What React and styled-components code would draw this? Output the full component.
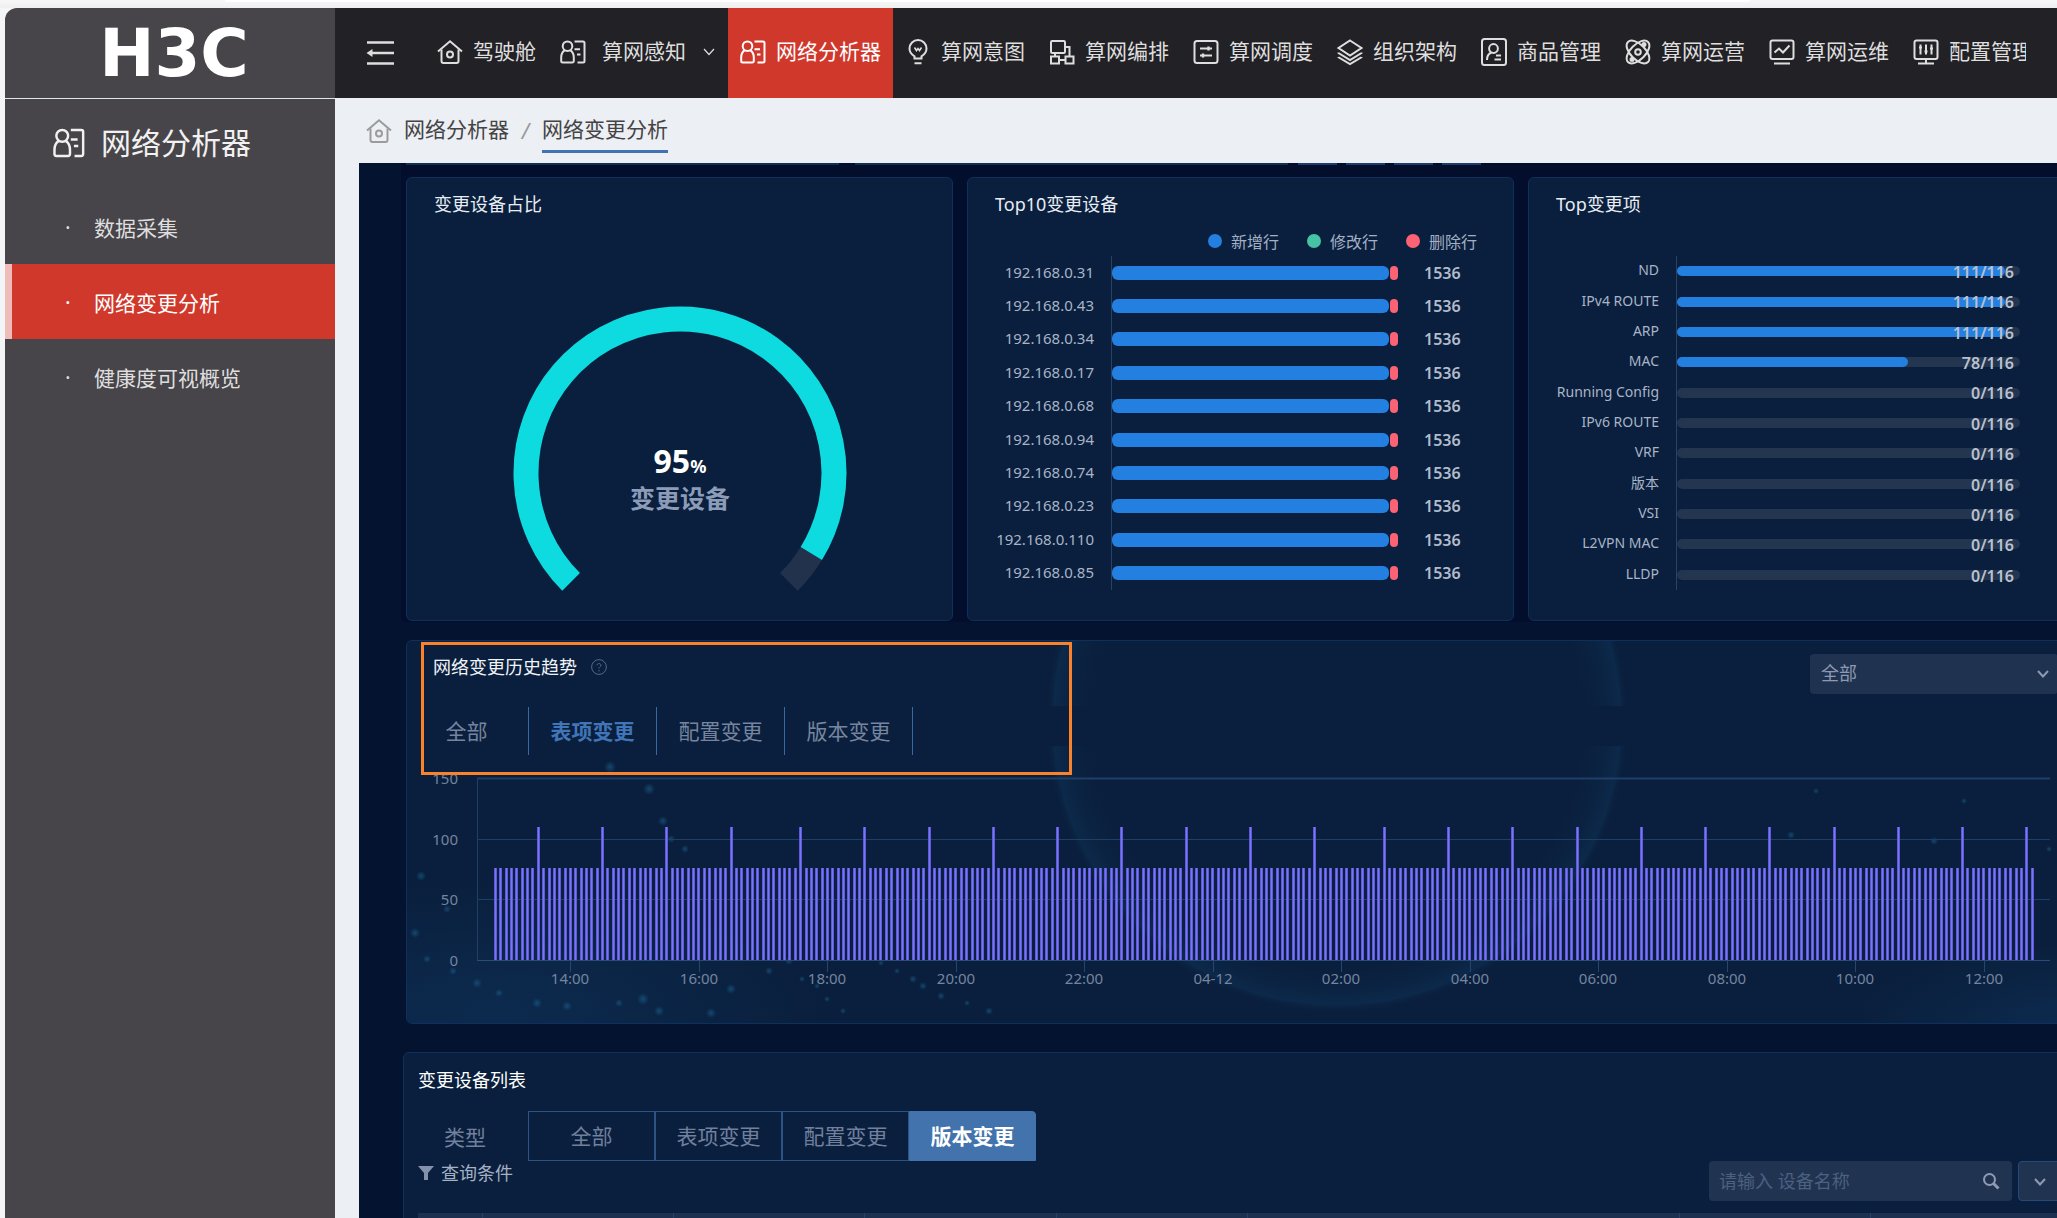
import React, { useState } from 'react'
import styled, { createGlobalStyle, css } from 'styled-components'

const navItems = [
  { text: '驾驶舱', icon: 'home' },
  { text: '算网感知', icon: 'report', sub: true },
  { text: '网络分析器', icon: 'report', active: true },
  { text: '算网意图', icon: 'bulb' },
  { text: '算网编排', icon: 'blocks' },
  { text: '算网调度', icon: 'switches' },
  { text: '组织架构', icon: 'layers' },
  { text: '商品管理', icon: 'badge' },
  { text: '算网运营', icon: 'atom' },
  { text: '算网运维', icon: 'monitor' },
  { text: '配置管理', icon: 'tuner' },
]

const sideItems = ['数据采集', '网络变更分析', '健康度可视概览']

const devices = ['31', '43', '34', '17', '68', '94', '74', '23', '110', '85']

const changeItems = [
  { name: 'ND', count: 111 },
  { name: 'IPv4 ROUTE', count: 111 },
  { name: 'ARP', count: 111 },
  { name: 'MAC', count: 78 },
  { name: 'Running Config', count: 0 },
  { name: 'IPv6 ROUTE', count: 0 },
  { name: 'VRF', count: 0 },
  { name: '版本', count: 0 },
  { name: 'VSI', count: 0 },
  { name: 'L2VPN MAC', count: 0 },
  { name: 'LLDP', count: 0 },
]
const total = 116

const tabs = ['全部', '表项变更', '配置变更', '版本变更']

const hours = ['14:00', '16:00', '18:00', '20:00', '22:00', '04-12', '02:00', '04:00', '06:00', '08:00', '10:00', '12:00']

// column widths of the device list
const columns = [64, 191, 191, 192, 191, 432, 191]

// one sample every five minutes, the hourly ones are higher
const peaks = [8, 20, 32, 44, 57, 69, 81, 93, 105, 117, 129, 141, 153, 166, 178, 190, 202, 214, 226, 238, 250, 262, 274, 286]
const samples = Array.from({ length: 288 }, (_, i) => (peaks.includes(i) ? 110 : 77))

const shapes = {
  home: (
    <>
      <path d="M1 12.5 13 2.2 25 12.5" />
      <path d="M4.5 10.5V22a2 2 0 0 0 2 2h13a2 2 0 0 0 2-2V10.5" />
      <circle cx="13" cy="15.5" r="3" />
    </>
  ),
  report: (
    <>
      <circle cx="7.5" cy="7.2" r="4.800" />
      <path d="M4.800 11.2C2.4 12.8 1.200 15.500 1.200 18.500V22a1.500 1.500 0 0 0 1.500 1.500h9.600a1.500 1.500 0 0 0 1.500-1.500v-3.500c0-3-1.200-5.700-3.600-7.300" />
      <path d="M14.500 2.500H23a1.500 1.500 0 0 1 1.500 1.500v18a1.500 1.500 0 0 1-1.500 1.500h-5.500M14.500 10.200h5.500M17 15.500h3.500" />
    </>
  ),
  bulb: (
    <>
      <path d="M9.500 19.500v-2.200C6.500 15.500 4.500 13 4.500 9.500a8.500 8.500 0 0 1 17 0c0 3.500-2 6-5 7.800v2.200z" />
      <path d="M9.500 8.500l2 3 1.500-2 1.500 2 2-3" strokeWidth="1.600" />
      <path d="M9.500 24.200h7" />
    </>
  ),
  blocks: (
    <>
      <rect x="2" y="2" width="14" height="12" rx="1.200" />
      <rect x="2" y="17.500" width="8" height="7" />
      <rect x="16.500" y="17.500" width="8" height="7" />
      <path d="M16 8h4.500v9.500M10 21h6.500M6 14v3.500" />
    </>
  ),
  switches: (
    <>
      <rect x="1.500" y="2" width="23" height="22" rx="2.500" />
      <path d="M7 9.500h12M7 16.500h12" />
      <path d="M15.500 7.500v4M10 14.500v4" strokeWidth="2.400" />
    </>
  ),
  layers: (
    <>
      <path d="M13 1.500 24.500 9 13 16.500 1.500 9z" />
      <path d="M1.500 13.500v.5L13 21l11.500-7v-.5M1.500 18v.300L13 25l11.500-6.700V18" />
    </>
  ),
  badge: (
    <>
      <rect x="1" y="0" width="24" height="26" rx="2.500" />
      <circle cx="12.500" cy="9.500" r="4.400" />
      <path d="M10.500 13.500C7.500 14.500 6 17.500 6 21M15 16.500h5M13.500 20.500h6.500" />
    </>
  ),
  atom: (
    <>
      <ellipse cx="13" cy="13" rx="14.200" ry="7.500" transform="rotate(45 13 13)" />
      <ellipse cx="13" cy="13" rx="14.200" ry="7.500" transform="rotate(-45 13 13)" />
      <circle cx="13" cy="13" r="2.800" />
      <circle cx="19" cy="5.500" r="1.500" fill="currentColor" />
      <circle cx="7" cy="20.500" r="1.500" fill="currentColor" />
    </>
  ),
  monitor: (
    <>
      <rect x="1.500" y="1.500" width="23" height="18.500" rx="2" />
      <path d="M5.500 13.500l4.500-4 4 4 6.500-7M5 24.500h16" />
    </>
  ),
  tuner: (
    <>
      <rect x="1.500" y="1.500" width="23" height="18.500" rx="2" />
      <path d="M7.500 5.500v10M13 5.500v10M18.500 5.500v10" />
      <path d="M6 8.500h3M11.500 12.500h3M17 9.500h3M13 20v4M5 24.500h16" />
    </>
  ),
}

function Icon({ name, size = 26 }) {
  return (
    <svg width={size} height={size} viewBox="0 0 26 26" fill="none" stroke="currentColor" strokeWidth="2" overflow="visible" aria-hidden="true">
      {shapes[name]}
    </svg>
  )
}

function Chevron({ width = 12, stroke = 2 }) {
  return (
    <svg width={width} height="8" viewBox="0 0 12 8" fill="none" stroke="currentColor" strokeWidth={stroke} aria-hidden="true">
      <path d="M1 1l5 5.500L11 1" />
    </svg>
  )
}

function polar(r, deg) {
  const a = (deg * Math.PI) / 180
  return `${167 + r * Math.cos(a)} ${167 + r * Math.sin(a)}`
}

function arc(from, to) {
  const large = to - from > 180 ? 1 : 0
  return `M${polar(154, from)}A154 154 0 ${large} 1 ${polar(154, to)}`
}

function Gauge({ value }) {
  const end = 135 + 270 * (value / 100)
  return (
    <GaugeSvg viewBox="0 0 334 288" width="334" height="288">
      <path d={arc(end, 405)} stroke="#22314c" />
      <path d={arc(135, end)} stroke="#0ddbe0" />
      <text x="167" y="167" fontSize="32" fill="#fff">
        {value}
        <tspan fontSize="18">%</tspan>
      </text>
      <text x="167" y="202" fontSize="25" fill="#8c9cb8">变更设备</text>
    </GaugeSvg>
  )
}

function TrendChart() {
  const yOf = (v) => Math.round(185 - v * 1.213)
  return (
    <ChartSvg viewBox="0 0 1667 248">
      {[0, 50, 100, 150].map((v) => (
        <g key={v}>
          <path d={`M70 ${yOf(v)}.500H1643`} stroke="#1f3f66" strokeWidth={v === 150 ? 2 : 1} />
          <text x="51" y={yOf(v) + 6} textAnchor="end">{v}</text>
        </g>
      ))}
      <path d="M70.500 3V185" stroke="#1f3f66" />
      {hours.map((h, i) => {
        const x = Math.round(163 + i * 128.5)
        return (
          <g key={h}>
            <path d={`M${x}.500 186v11`} stroke="#27466d" />
            <text x={x} y="209" textAnchor="middle">{h}</text>
          </g>
        )
      })}
      {samples.map((v, i) => {
        const x = Math.round(87 + i * 5.354)
        const y = v > 100 ? yOf(v) : yOf(v) + 1
        return (
          <g key={i}>
            <rect x={x} y={y} width="3" height={185 - y} fill="#5f5bd6" />
            <rect x={x + 1} y={y} width="1" height={185 - y} fill="#7a73fb" />
          </g>
        )
      })}
      <path d="M70 185.500H1643" stroke="#2c4c78" />
    </ChartSvg>
  )
}

// faint planet outline and star dust behind the trend chart
function Sky() {
  const dust = [
    [14, 235, 3], [40, 268, 2], [8, 292, 3], [20, 318, 2], [46, 330, 2], [70, 342, 3], [92, 352, 2], [130, 362, 3],
    [203, 126, 4], [242, 148, 4], [256, 180, 3], [264, 198, 2], [278, 208, 2], [160, 365, 3], [212, 362, 2], [236, 358, 4],
    [252, 370, 3], [304, 372, 3], [324, 348, 3], [382, 320, 2], [362, 330, 2], [395, 338, 1], [410, 345, 1], [420, 358, 1],
    [436, 370, 1], [474, 322, 1], [490, 330, 1], [506, 338, 2], [516, 345, 2], [534, 355, 2], [560, 362, 1], [582, 370, 2],
    [1409, 150, 1], [1384, 194, 2], [1527, 200, 2], [1642, 208, 1], [1557, 160, 1],
  ]
  return (
    <SkySvg viewBox="0 0 1667 382" preserveAspectRatio="xMidYMid slice" aria-hidden="true">
      <defs>
        <radialGradient id="glow" cx="50%" cy="50%" r="50%">
          <stop offset="0.82" stopColor="#0a1f3d" stopOpacity="0" />
          <stop offset="0.97" stopColor="#12406a" stopOpacity="0.3" />
          <stop offset="1" stopColor="#0a1f3d" stopOpacity="0" />
        </radialGradient>
        <radialGradient id="haze">
          <stop offset="0" stopColor="#10406e" stopOpacity="0.35" />
          <stop offset="1" stopColor="#10406e" stopOpacity="0" />
        </radialGradient>
        <radialGradient id="dust">
          <stop offset="0" stopColor="#1a6291" stopOpacity="0.6" />
          <stop offset="1" stopColor="#1a6291" stopOpacity="0" />
        </radialGradient>
      </defs>
      <circle cx="930" cy="80" r="292" fill="url(#glow)" />
      <rect x="0" y="65" width="1667" height="40" fill="#0a1f3d" />
      <ellipse cx="90" cy="370" rx="330" ry="130" fill="url(#haze)" />
      <ellipse cx="1667" cy="382" rx="220" ry="80" fill="url(#haze)" />
      {dust.map(([x, y, r]) => (
        <circle key={`${x}-${y}`} cx={x} cy={y} r={r + 2} fill="url(#dust)" />
      ))}
    </SkySvg>
  )
}

function App() {
  const [trendTab, setTrendTab] = useState('表项变更')
  const [listTab, setListTab] = useState('版本变更')

  return (
    <Page>
      <GlobalStyle />
      <TopEdge><span /></TopEdge>
      <Shell>
        <Sidebar>
          <Logo>H3C</Logo>
          <SideTitle>
            <Icon name="report" size={32} />
            网络分析器
          </SideTitle>
          <nav>
            {sideItems.map((item, i) => (
              <SideLink key={item} href="#" $active={i === 1}>
                <i>·</i>
                {item}
              </SideLink>
            ))}
          </nav>
        </Sidebar>

        <Main>
          <Header>
            <Toggle aria-label="收起菜单">
              <svg width="28" height="26" viewBox="0 0 28 26" fill="none" stroke="currentColor" strokeWidth="2.400">
                <path d="M1 2.500h27M4 13h24M1 23.500h27" />
                <path d="M6.500 9v8L.500 13z" fill="currentColor" stroke="none" />
              </svg>
            </Toggle>
            <Nav>
              {navItems.map((item) => (
                <NavLink key={item.text} href="#" $active={item.active} $sub={item.sub}>
                  <Icon name={item.icon} />
                  <span>{item.text}</span>
                  {item.sub && <Chevron width={14} stroke={1.2} />}
                </NavLink>
              ))}
            </Nav>
          </Header>

          <Crumbs>
            <Icon name="home" />
            <Crumb href="#">网络分析器</Crumb>
            <em>/</em>
            <Crumb href="#" $current>网络变更分析</Crumb>
          </Crumbs>

          <Board>
            <Content>
              <PrevRow>
                <span /><span /><b /><b /><b /><b />
              </PrevRow>

              <Cards>
                <Card>
                  <CardTitle>变更设备占比</CardTitle>
                  <Gauge value={95} />
                </Card>

                <Card>
                  <CardTitle>Top10变更设备</CardTitle>
                  <Legend>
                    <LegendItem $color="#237fe0">新增行</LegendItem>
                    <LegendItem $color="#45c3a4">修改行</LegendItem>
                    <LegendItem $color="#fb6375">删除行</LegendItem>
                  </Legend>
                  <Rows $right={115} $label={143}>
                    {devices.map((d) => (
                      <Row key={d}>
                        <RowLabel $size={15}>192.168.0.{d}</RowLabel>
                        <Axis>
                          <AddBar />
                          <DelBar />
                        </Axis>
                        <RowValue>1536</RowValue>
                      </Row>
                    ))}
                  </Rows>
                </Card>

                <Card>
                  <CardTitle>Top变更项</CardTitle>
                  <Rows $right={54} $label={147} $top={39}>
                    {changeItems.map((c) => (
                      <Row key={c.name}>
                        <RowLabel $size={14}>{c.name}</RowLabel>
                        <Axis>
                          <Track>
                            <Fill style={{ width: `${(c.count / total) * 100}%` }} />
                          </Track>
                          <OverValue>{c.count}/{total}</OverValue>
                        </Axis>
                      </Row>
                    ))}
                  </Rows>
                </Card>
              </Cards>

              <Trend>
                <Sky />
                <TrendHead>
                  <Focus>
                    <TrendTitle>
                      网络变更历史趋势
                      <svg width="16" height="16" viewBox="0 0 16 16" fill="none" stroke="#56688a" aria-hidden="true">
                        <circle cx="8" cy="8" r="7.400" />
                        <path d="M6 6.300C6 4 10 4 10 6.300c0 1.400-2 1.400-2 3.200M8 11v1.400" />
                      </svg>
                    </TrendTitle>
                    <TrendTabs>
                      {tabs.map((t) => (
                        <TrendTab key={t} $active={t === trendTab} onClick={() => setTrendTab(t)}>{t}</TrendTab>
                      ))}
                    </TrendTabs>
                  </Focus>
                  <SelectBox>
                    <select aria-label="设备范围" defaultValue="全部">
                      <option>全部</option>
                    </select>
                    <Chevron />
                  </SelectBox>
                </TrendHead>
                <TrendChart />
              </Trend>

              <List>
                <ListTitle>变更设备列表</ListTitle>
                <TypeRow>
                  <span>类型</span>
                  {tabs.map((t) => (
                    <TypeTab key={t} $active={t === listTab} onClick={() => setListTab(t)}>{t}</TypeTab>
                  ))}
                </TypeRow>
                <FilterRow>
                  <FilterLabel>
                    <svg width="16" height="14" viewBox="0 0 16 14" fill="#8391ad" aria-hidden="true">
                      <path d="M0 0h16L10 7v7H6V7z" />
                    </svg>
                    查询条件
                  </FilterLabel>
                  <Search>
                    <input aria-label="设备名称" placeholder="请输入 设备名称" />
                    <svg width="18" height="18" viewBox="0 0 18 18" fill="none" stroke="#8f9bb3" aria-hidden="true">
                      <circle cx="7.500" cy="7.500" r="5.500" strokeWidth="2" />
                      <path d="M11.500 11.500l5 5" strokeWidth="3" />
                    </svg>
                  </Search>
                  <More aria-label="更多条件"><Chevron /></More>
                </FilterRow>
                <Table>
                  <colgroup>
                    {columns.map((w, i) => <col key={i} width={w} />)}
                    <col />
                  </colgroup>
                  <thead>
                    <tr>
                      {columns.map((w, i) => <th key={i} />)}
                      <th />
                    </tr>
                  </thead>
                </Table>
              </List>
            </Content>
          </Board>
        </Main>
      </Shell>
    </Page>
  )
}

const GlobalStyle = createGlobalStyle`
* { box-sizing: border-box; }
body {
  margin: 0;
  background: #f4f5f6;
  font-family: "Noto Sans", "Noto Sans CJK SC", sans-serif;
  overflow: hidden;
}
a { color: inherit; text-decoration: none; }
button, input, select { font-family: inherit; }
button { cursor: pointer; }
`

const Page = styled.div`
display: flex;
flex-direction: column;
height: 100vh;
overflow: hidden;
`

const TopEdge = styled.div`
height: 8px;
flex: none;
background: linear-gradient(#f7f7f7, #eeefef);

span {
  display: block;
  height: 2px;
  margin: 0 307px 0 225px;
  background: #fff;
  border-radius: 0 0 8px 8px;
}
`

const Shell = styled.div`
display: flex;
flex: 1;
min-height: 0;
margin-left: 5px;
border-radius: 12px 0 0 0;
overflow: hidden;
`

const Sidebar = styled.aside`
width: 330px;
flex: none;
background: #474549;
color: #dededf;
`

const Logo = styled.div`
height: 91px;
display: flex;
align-items: center;
justify-content: center;
padding: 2px 0 0 8px;
border-bottom: 1px solid #dfe6e8;
color: #fff;
font: bold 66px/88px "DejaVu Sans", sans-serif;
`

const SideTitle = styled.div`
display: flex;
align-items: center;
gap: 16px;
height: 90px;
padding: 0 0 2px 48px;
color: #f1f1f1;
font-size: 30px;
line-height: 40px;
`

const SideLink = styled.a`
display: flex;
align-items: center;
height: 75px;
padding-left: 53px;
font-size: 21px;
border-left: 7px solid transparent;

i {
  width: 29px;
  font-style: normal;
}

${(p) => p.$active && css`
  background: #d1382c;
  border-left-color: #f0bcb9;
  color: #fff;
`}
`

const Main = styled.div`
flex: 1;
min-width: 0;
display: flex;
flex-direction: column;
background: #eceff4;
`

const Header = styled.header`
display: flex;
align-items: center;
height: 90px;
flex: none;
padding: 0 31px;
background: #222126;
color: #dedede;
`

const Toggle = styled.button`
display: flex;
padding: 0;
border: 0;
background: none;
color: inherit;
`

const Nav = styled.nav`
display: flex;
flex: 1;
min-width: 0;
height: 100%;
margin-left: 31px;
overflow: hidden;
`

const NavLink = styled.a`
display: flex;
align-items: center;
flex: none;
gap: ${(p) => (p.$sub ? 16 : 10)}px;
padding: 0 12px 2px;
font-size: 21px;
line-height: 28px;
white-space: nowrap;

span {
  padding-bottom: 2px;
}

${(p) => p.$active && css`
  background: #d1382c;
  color: #fff;
`}
`

const Crumbs = styled.div`
display: flex;
align-items: center;
height: 65px;
flex: none;
padding-left: 31px;
font-size: 21px;
color: #444;

> svg {
  margin-right: 12px;
  color: #9b9b9b;
}

em {
  width: 33px;
  text-align: center;
  color: #999;
}
`

const Crumb = styled.a`
height: 42px;
margin-top: 3px;
line-height: 36px;
border-bottom: 3px solid ${(p) => (p.$current ? '#4273b0' : 'transparent')};
`

const Board = styled.div`
flex: 1;
min-height: 0;
margin-left: 24px;
padding-left: 47px;
background: #04132f linear-gradient(#020e2c 459px, transparent 459px) 42px 0 no-repeat;
overflow: hidden;
`

const Content = styled.div`
display: flex;
flex-direction: column;
height: 100%;
margin-right: -18px;
`

const PrevRow = styled.div`
display: flex;
flex: none;
height: 2px;
margin-bottom: 12px;

span, b {
  background: #142f50;
}
span {
  width: 433px;
  margin-right: 16px;
}
span + span {
  margin-right: 10px;
}
b {
  width: 39px;
  margin-right: 9px;
  background: #1b3d69;
}
`

const panel = css`
background: #0a1f3d;
border: 1px solid #0f2f5c;
border-radius: 6px;
`

const Cards = styled.div`
display: grid;
grid-template-columns: repeat(3, 1fr);
gap: 14px;
flex: none;
`

const Card = styled.section`
${panel}
display: flex;
flex-direction: column;
height: 444px;
`

const CardTitle = styled.h2`
margin: 13px 27px 0;
font-size: 18px;
line-height: 26px;
font-weight: 400;
color: #e8edf3;
`

const GaugeSvg = styled.svg`
align-self: center;
margin-top: 89px;
fill: none;
stroke-width: 25px;

text {
  stroke: none;
  text-anchor: middle;
  font-weight: 700;
}
`

const Legend = styled.div`
display: flex;
justify-content: flex-end;
gap: 28px;
margin: 14px 36px 0 0;
`

const LegendItem = styled.span`
display: flex;
align-items: center;
gap: 9px;
height: 20px;
font-size: 16px;
color: #a3b0c4;

&::before {
  content: '';
  width: 14px;
  height: 14px;
  border-radius: 50%;
  background: ${(p) => p.$color};
}
`

const Rows = styled.div`
display: grid;
grid-auto-rows: 1fr;
height: 334px;
margin-top: ${(p) => p.$top || 5}px;
--label: ${(p) => p.$label}px;
--right: ${(p) => p.$right}px;
`

const Row = styled.div`
display: grid;
grid-template-columns: var(--label) 1fr var(--right);
align-items: center;
`

const RowLabel = styled.span`
padding: 0 17px 2px 0;
text-align: right;
font-size: ${(p) => p.$size}px;
line-height: 20px;
color: #a8b4c8;
`

const Axis = styled.div`
position: relative;
display: flex;
align-items: center;
gap: 1px;
height: 100%;
border-left: 1px solid #2a4365;
`

const AddBar = styled.div`
flex: 1;
height: 14px;
border-radius: 6px;
background: #237fe0;
`

const DelBar = styled.div`
width: 8px;
height: 14px;
border-radius: 4px;
background: #fb6375;
`

const RowValue = styled.span`
padding-left: 26px;
font-size: 16px;
line-height: 20px;
font-weight: 600;
color: #b2bccd;
`

const Track = styled.div`
flex: 1;
height: 10px;
border-radius: 5px;
background: #23354f;
`

const Fill = styled.div`
height: 10px;
border-radius: 5px;
background: #237fe0;
`

const OverValue = styled.span`
position: absolute;
right: 6px;
top: 6px;
font-size: 16px;
line-height: 20px;
font-weight: 600;
color: #b9c1cf;
`

const Trend = styled.section`
${panel}
position: relative;
flex: none;
margin-top: 19px;
overflow: hidden;
`

const SkySvg = styled.svg`
position: absolute;
inset: 0;
width: 100%;
height: 100%;
`

const TrendHead = styled.div`
position: relative;
z-index: 1;
display: flex;
justify-content: space-between;
padding: 1px 16px 0 14px;
`

const Focus = styled.div`
width: 651px;
height: 133px;
border: 3px solid #f9822a;
`

const TrendTitle = styled.h2`
display: flex;
align-items: center;
gap: 14px;
margin: 9px 0 0 9px;
font-size: 18px;
line-height: 26px;
font-weight: 400;
color: #f0f3f7;
`

const TrendTabs = styled.div`
display: flex;
margin: 27px 0 0 -19px;
`

const TrendTab = styled.button`
width: 128px;
height: 48px;
padding: 0 0 3px;
background: none;
border: 0;
border-right: 1px solid #3a68a5;
font-size: 21px;
color: ${(p) => (p.$active ? '#4076b8' : '#76859f')};
font-weight: ${(p) => (p.$active ? 700 : 400)};

&:first-child {
  width: 124px;
}
`

const SelectBox = styled.div`
position: relative;
width: 248px;
height: 40px;
margin-top: 12px;
color: #8c9ab2;

select {
  width: 100%;
  height: 100%;
  padding: 0 11px 2px;
  appearance: none;
  border: 0;
  border-radius: 4px;
  background: #1f3250;
  color: inherit;
  font-size: 18px;
}
svg {
  position: absolute;
  right: 9px;
  top: 16px;
}
`

const ChartSvg = styled.svg`
position: relative;
display: block;
width: 100%;
overflow: visible;

text {
  font-size: 15px;
  fill: #75849f;
}
`

const List = styled.section`
${panel}
flex: 1 0 auto;
margin: 28px 0 0 -3px;
padding: 14px 12px 0 14px;
`

const ListTitle = styled.h2`
margin: 0;
font-size: 18px;
line-height: 26px;
font-weight: 400;
color: #fff;
`

const TypeRow = styled.div`
display: flex;
align-items: center;
margin-top: 18px;
font-size: 21px;
color: #71809d;

span {
  width: 110px;
  padding-left: 26px;
}
`

const TypeTab = styled.button`
width: 127px;
height: 50px;
padding: 0 0 2px;
border: 1px solid #2c5286;
background: none;
font-size: 21px;
color: inherit;

&:last-child {
  border-radius: 0 4px 0 0;
}

${(p) => p.$active && css`
  background: #4273ad;
  border-color: #4273ad;
  color: #fff;
  font-weight: 700;
`}
`

const FilterRow = styled.div`
display: flex;
align-items: flex-start;
gap: 6px;
`

const FilterLabel = styled.span`
display: flex;
align-items: center;
gap: 7px;
margin-right: auto;
font-size: 18px;
line-height: 24px;
color: #a5b1c5;
`

const Search = styled.div`
position: relative;

input {
  width: 303px;
  height: 40px;
  padding: 0 40px 1px 10px;
  border: 0;
  border-radius: 4px;
  background: #203452;
  color: #c5cedb;
  font-size: 18px;
}
input::placeholder {
  color: #4c607f;
}
svg {
  position: absolute;
  right: 12px;
  top: 11px;
}
`

const More = styled.button`
width: 44px;
height: 40px;
border: 1px solid #27497a;
border-radius: 4px;
background: #203452;
color: #8f9bb3;
`

const Table = styled.table`
width: 100%;
margin-top: 12px;
table-layout: fixed;
border-collapse: collapse;

th {
  height: 40px;
  padding: 0;
  background: #1d3050;
  border-right: 1px solid #27426a;
}
`

export default App
